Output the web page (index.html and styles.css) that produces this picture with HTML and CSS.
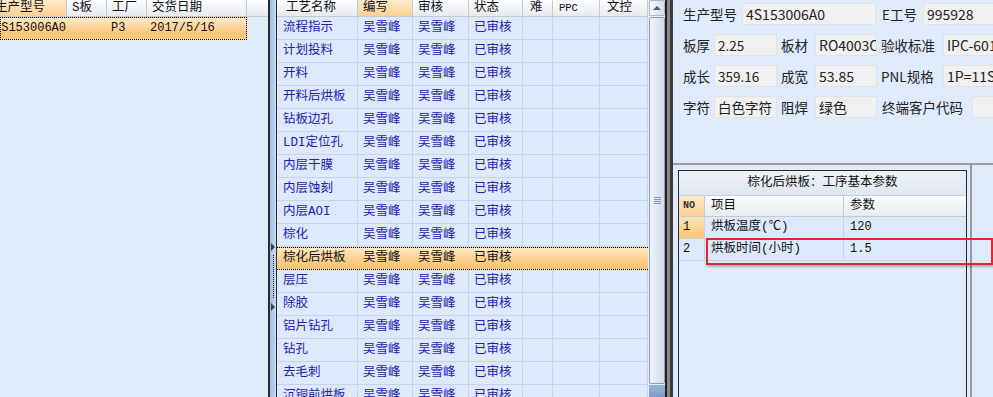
FILE: index.html
```html
<!DOCTYPE html>
<html>
<head>
<meta charset="utf-8">
<link rel="stylesheet" href="styles.css">
</head>
<body>
<div class="app">
  <section class="left">
    <div class="ghead">
      <div class="hc lw1 hot"><span class="cut-h">生产型号</span></div>
      <div class="hc lw2">S板</div>
      <div class="hc lw3">工厂</div>
      <div class="hc lw4">交货日期</div>
      <div class="hc lwf"></div>
    </div>
    <div class="lrow">
      <div class="lsel">
        <div class="lc lw1"><span class="n cut-r">4S153006A0</span></div>
        <div class="lc lw2"></div>
        <div class="lc lw3 n">P3</div>
        <div class="lc lw4 n">2017/5/16</div>
      </div>
    </div>
  </section>

  <div class="split1">
    <div class="s-dark"></div>
    <div class="s-blue">
      <div class="tri"></div>
      <div class="dots"></div>
      <div class="tri"></div>
    </div>
    <div class="s-dark thin"></div>
  </div>

  <section class="mid">
    <div class="grid">
      <div class="ghead">
        <div class="hc w1 first">工艺名称</div>
        <div class="hc w2 hot">编写</div>
        <div class="hc w3">审核</div>
        <div class="hc w4">状态</div>
        <div class="hc w5">难</div>
        <div class="hc w6 n">PPC</div>
        <div class="hc w7">文控</div>
      </div>
      <div class="row"><div class="c w1">流程指示</div><div class="c w2">吴雪峰</div><div class="c w3">吴雪峰</div><div class="c w4">已审核</div><div class="c w5"></div><div class="c w6"></div><div class="c w7"></div></div>
      <div class="row"><div class="c w1">计划投料</div><div class="c w2">吴雪峰</div><div class="c w3">吴雪峰</div><div class="c w4">已审核</div><div class="c w5"></div><div class="c w6"></div><div class="c w7"></div></div>
      <div class="row"><div class="c w1">开料</div><div class="c w2">吴雪峰</div><div class="c w3">吴雪峰</div><div class="c w4">已审核</div><div class="c w5"></div><div class="c w6"></div><div class="c w7"></div></div>
      <div class="row"><div class="c w1">开料后烘板</div><div class="c w2">吴雪峰</div><div class="c w3">吴雪峰</div><div class="c w4">已审核</div><div class="c w5"></div><div class="c w6"></div><div class="c w7"></div></div>
      <div class="row"><div class="c w1">钻板边孔</div><div class="c w2">吴雪峰</div><div class="c w3">吴雪峰</div><div class="c w4">已审核</div><div class="c w5"></div><div class="c w6"></div><div class="c w7"></div></div>
      <div class="row"><div class="c w1">LDI定位孔</div><div class="c w2">吴雪峰</div><div class="c w3">吴雪峰</div><div class="c w4">已审核</div><div class="c w5"></div><div class="c w6"></div><div class="c w7"></div></div>
      <div class="row"><div class="c w1">内层干膜</div><div class="c w2">吴雪峰</div><div class="c w3">吴雪峰</div><div class="c w4">已审核</div><div class="c w5"></div><div class="c w6"></div><div class="c w7"></div></div>
      <div class="row"><div class="c w1">内层蚀刻</div><div class="c w2">吴雪峰</div><div class="c w3">吴雪峰</div><div class="c w4">已审核</div><div class="c w5"></div><div class="c w6"></div><div class="c w7"></div></div>
      <div class="row"><div class="c w1">内层AOI</div><div class="c w2">吴雪峰</div><div class="c w3">吴雪峰</div><div class="c w4">已审核</div><div class="c w5"></div><div class="c w6"></div><div class="c w7"></div></div>
      <div class="row"><div class="c w1">棕化</div><div class="c w2">吴雪峰</div><div class="c w3">吴雪峰</div><div class="c w4">已审核</div><div class="c w5"></div><div class="c w6"></div><div class="c w7"></div></div>
      <div class="row sel"><div class="c w1">棕化后烘板</div><div class="c w2">吴雪峰</div><div class="c w3">吴雪峰</div><div class="c w4">已审核</div><div class="c w5"></div><div class="c w6"></div><div class="c w7"></div></div>
      <div class="row"><div class="c w1">层压</div><div class="c w2">吴雪峰</div><div class="c w3">吴雪峰</div><div class="c w4">已审核</div><div class="c w5"></div><div class="c w6"></div><div class="c w7"></div></div>
      <div class="row"><div class="c w1">除胶</div><div class="c w2">吴雪峰</div><div class="c w3">吴雪峰</div><div class="c w4">已审核</div><div class="c w5"></div><div class="c w6"></div><div class="c w7"></div></div>
      <div class="row"><div class="c w1">铝片钻孔</div><div class="c w2">吴雪峰</div><div class="c w3">吴雪峰</div><div class="c w4">已审核</div><div class="c w5"></div><div class="c w6"></div><div class="c w7"></div></div>
      <div class="row"><div class="c w1">钻孔</div><div class="c w2">吴雪峰</div><div class="c w3">吴雪峰</div><div class="c w4">已审核</div><div class="c w5"></div><div class="c w6"></div><div class="c w7"></div></div>
      <div class="row"><div class="c w1">去毛刺</div><div class="c w2">吴雪峰</div><div class="c w3">吴雪峰</div><div class="c w4">已审核</div><div class="c w5"></div><div class="c w6"></div><div class="c w7"></div></div>
      <div class="row"><div class="c w1">沉铜前烘板</div><div class="c w2">吴雪峰</div><div class="c w3">吴雪峰</div><div class="c w4">已审核</div><div class="c w5"></div><div class="c w6"></div><div class="c w7"></div></div>
    </div>
    <div class="vscroll">
      <div class="sb-btn"><div class="arrow-up"></div></div>
      <div class="thumb"><div class="grip"></div></div>
      <div class="sb-bot"></div>
    </div>
  </section>

  <div class="split2"></div>

  <section class="right">
    <div class="form">
      <div class="frow">
        <div class="lb f1">生产型号</div>
        <div class="bx b1">4S153006A0</div>
        <div class="lb f2">E工号</div>
        <div class="bx bw">995928</div>
      </div>
      <div class="frow">
        <div class="lb s1">板厚</div>
        <div class="bx sb1">2.25</div>
        <div class="lb s2">板材</div>
        <div class="bx sb2">RO4003C</div>
        <div class="lb s3">验收标准</div>
        <div class="bx bw">IPC-6012</div>
      </div>
      <div class="frow">
        <div class="lb s1">成长</div>
        <div class="bx sb1">359.16</div>
        <div class="lb s2">成宽</div>
        <div class="bx sb2">53.85</div>
        <div class="lb s3">PNL规格</div>
        <div class="bx bw">1P=11SET</div>
      </div>
      <div class="frow">
        <div class="lb s1">字符</div>
        <div class="bx sb1">白色字符</div>
        <div class="lb s2">阻焊</div>
        <div class="bx sb2">绿色</div>
        <div class="lb s4">终端客户代码</div>
        <div class="bx bw"></div>
      </div>
    </div>
    <div class="bottom">
      <div class="bleft">
        <div class="panel">
          <div class="ptitle">棕化后烘板：工序基本参数</div>
          <div class="prow phead">
            <div class="pc pno hot n small">NO</div>
            <div class="pc pk">项目</div>
            <div class="pc pv">参数</div>
          </div>
          <div class="prow">
            <div class="pc pno cur n">1</div>
            <div class="pc pk">烘板温度(℃)</div>
            <div class="pc pv n">120</div>
          </div>
          <div class="prow">
            <div class="pc pno n">2</div>
            <div class="pc pk">烘板时间(小时)</div>
            <div class="pc pv n">1.5</div>
          </div>
        </div>
      </div>
      <div class="bline"></div>
      <div class="bright"></div>
    </div>
  </section>

  <div class="mark"></div>
</div>
</body>
</html>
```

FILE: styles.css
```css
* { box-sizing: border-box; margin: 0; padding: 0; }
html, body { width: 993px; height: 397px; overflow: hidden; }
body {
  font-family: "Liberation Mono", "Noto Sans CJK SC", monospace;
  font-size: 12.5px;
  color: #111;
  background: #dfeafb;
}
.app { display: flex; height: 397px; position: relative; }
.n { font-size: 12px; }

/* generic grid header */
.ghead { display: flex; height: 17px; }
.hc {
  height: 17px;
  background: linear-gradient(#fcfdfe, #e6eaf0);
  border-right: 1px solid #c4cad4;
  border-bottom: 1px solid #c4cad4;
  padding-left: 5px;
  line-height: 16px;
  white-space: nowrap;
  overflow: hidden;
  flex: none;
}
.hc.hot { background: linear-gradient(#fdeacb, #fbd095); }

/* left grid */
.left { width: 268px; flex: none; background: #dfeafb; overflow: hidden; }
.lw1 { width: 67px; }
.lw2 { width: 40px; }
.lw3 { width: 40px; }
.lw4 { width: 100px; }
.lwf { width: 21px; border-right: none; }
.left .hc.lw1 { padding-left: 0; }
.cut-h { display: block; margin-left: -5px; }
.lrow { display: flex; height: 23px; }
.lsel {
  width: 247px;
  display: flex;
  border: 1px dotted #000;
  background: linear-gradient(#fee9c4, #fcc97f 70%, #fbc57a);
}
.lc { flex: none; height: 21px; line-height: 21px; white-space: nowrap; overflow: hidden; padding-left: 4px; }
.lsel .lw1 { width: 66px; padding-left: 0; }
.lsel .lw4 { width: 99px; padding-left: 3px; }
.cut-r { display: block; margin-left: -7px; }

/* splitter 1 */
.split1 { width: 9px; flex: none; display: flex; }
.s-dark { width: 2px; background: #2c2c2c; }
.s-dark.thin { width: 1px; }
.s-blue {
  width: 6px;
  background: linear-gradient(to right, #9fbbe6, #c9dbf4);
  display: flex;
  flex-direction: column;
  align-items: center;
  padding-top: 243px;
}
.tri {
  width: 0; height: 0;
  border-top: 4px solid transparent;
  border-bottom: 4px solid transparent;
  border-left: 4px solid #3a4660;
}
.dots {
  width: 1px;
  height: 44px;
  margin: 4px 0;
  background: repeating-linear-gradient(#111 0 1px, transparent 1px 2px);
}

/* middle grid */
.mid { width: 388px; flex: none; display: flex; }
.grid { width: 371px; background: #dfeafb; overflow: hidden; }
.w1 { width: 81px; }
.w2 { width: 55px; }
.w3 { width: 56px; }
.w4 { width: 54px; }
.w5 { width: 30px; }
.w6 { width: 47px; }
.w7 { width: 48px; }
.hc.first { padding-left: 9px; }
.hc.w5, .hc.w7 { padding-left: 7px; }
.hc.w6 { padding-left: 6px; font-size: 10.5px; }
.row { display: flex; height: 23px; }
.c {
  flex: none;
  height: 23px;
  border-right: 1px solid #c4d3e9;
  border-bottom: 1px solid #c4d3e9;
  background: #dde9fb;
  color: #2222ae;
  padding-left: 5px;
  line-height: 22px;
  white-space: nowrap;
  overflow: hidden;
}
.c.w1 { padding-left: 6px; }
.row.sel {
  background: linear-gradient(#fee9c4, #fcc97f 70%, #fbc57a);
  border-top: 1px dotted #000;
  border-bottom: 1px dotted #000;
}
.row.sel .c {
  background: transparent;
  border-right-color: transparent;
  border-bottom: none;
  color: #111;
  height: 21px;
  line-height: 21px;
}

/* scrollbar */
.vscroll {
  width: 17px;
  flex: none;
  display: flex;
  flex-direction: column;
  background: #e4ecf7;
  padding-left: 1px;
}
.sb-btn {
  height: 16px;
  background: linear-gradient(to right, #f5f8fc, #d3ddeb);
  border: 1px solid #a9b8cf;
  border-radius: 2px;
  display: flex;
  align-items: center;
  justify-content: center;
}
.arrow-up {
  width: 0; height: 0;
  border-left: 4px solid transparent;
  border-right: 4px solid transparent;
  border-bottom: 4px solid #4a5a78;
}
.thumb {
  flex: 1;
  margin: 1px 0 1px;
  border: 1px solid #8e9fbd;
  border-radius: 2px;
  background: linear-gradient(to right, #eef2f9, #d3dceb);
  display: flex;
  align-items: center;
  justify-content: center;
}
.grip {
  width: 7px;
  height: 7px;
  background: repeating-linear-gradient(#8595b2 0 1px, transparent 1px 2px);
}
.sb-bot { height: 12px; background: linear-gradient(#9ab3da, #7e9bc7); }

/* splitter 2 */
.split2 {
  width: 8px;
  flex: none;
  border-left: 2px solid #1e1e1e;
  border-right: 3px solid #3a3a3a;
  background: #8a8a8a;
}

/* right panel */
.right {
  flex: 1;
  display: flex;
  flex-direction: column;
  overflow: hidden;
  font-family: "Noto Sans CJK SC", sans-serif;
  font-size: 13.5px;
  color: #222;
  background: #dfeafb;
}
.form {
  height: 165px;
  flex: none;
  border-bottom: 2px solid #9a9a9a;
  padding: 3px 0 0 10px;
  display: flex;
  flex-direction: column;
  gap: 9px;
}
.frow { display: flex; height: 22px; align-items: center; white-space: nowrap; }
.lb { flex: none; line-height: 22px; overflow: hidden; }
.bx {
  flex: none;
  height: 22px;
  background: #f0f0f0;
  border: 1px solid #e2e2e2;
  padding-left: 3px;
  line-height: 20px;
  font-size: 14px;
  overflow: hidden;
  white-space: nowrap;
}
.f1 { width: 59px; }
.b1 { width: 134px; }
.f2 { width: 47px; padding-left: 6px; }
.bw { width: 90px; }
.s1 { width: 31px; }
.sb1 { width: 63px; font-size: 13.5px; }
.s2 { width: 38px; padding-left: 4px; }
.sb2 { width: 62px; }
.s3 { width: 66px; padding-left: 4px; }
.s4 { width: 95px; padding-left: 5px; }

.bottom { flex: 1; display: flex; }
.bleft { width: 296px; flex: none; padding: 5px 0 0 5px; }
.panel {
  width: 289px;
  height: 100%;
  border: 1px solid #2a2a2a;
  border-bottom: none;
  background: #dfeafb;
  font-family: "Liberation Mono", "Noto Sans CJK SC", monospace;
  font-size: 12.5px;
  color: #111;
}
.ptitle {
  height: 25px;
  line-height: 25px;
  text-align: center;
  background: linear-gradient(#eef2f8, #dfe6f1);
  border-bottom: 1px solid #c6d0de;
}
.prow { display: flex; height: 22px; }
.prow.phead { height: 21px; }
.pc {
  flex: none;
  border-right: 1px solid #c4d3e9;
  border-bottom: 1px solid #c4d3e9;
  background: #dde9fb;
  padding-left: 6px;
  line-height: 21px;
  white-space: nowrap;
  overflow: hidden;
}
.phead .pc {
  background: linear-gradient(#fcfdfe, #e6eaf0);
  border-color: #c4cad4;
  line-height: 20px;
}
.phead .pc.hot { background: linear-gradient(#fdeacb, #fbd095); }
.pno { width: 26px; padding-left: 4px; }
.pk { width: 139px; }
.pv { flex: 1; border-right: none; }
.pc.cur { background: linear-gradient(#fee3b4, #fbc57a); }
.small { font-size: 10px; font-weight: bold; color: #333; }

.bline { width: 2px; flex: none; margin-left: 1px; background: #9a9a9a; }
.bright { flex: 1; }

/* red annotation box */
.mark {
  position: absolute;
  left: 706px;
  top: 238px;
  width: 287px;
  height: 27px;
  border: 2px solid #e2262b;
  box-shadow: 1px 2px 2px rgba(0, 0, 0, 0.25);
}
```
